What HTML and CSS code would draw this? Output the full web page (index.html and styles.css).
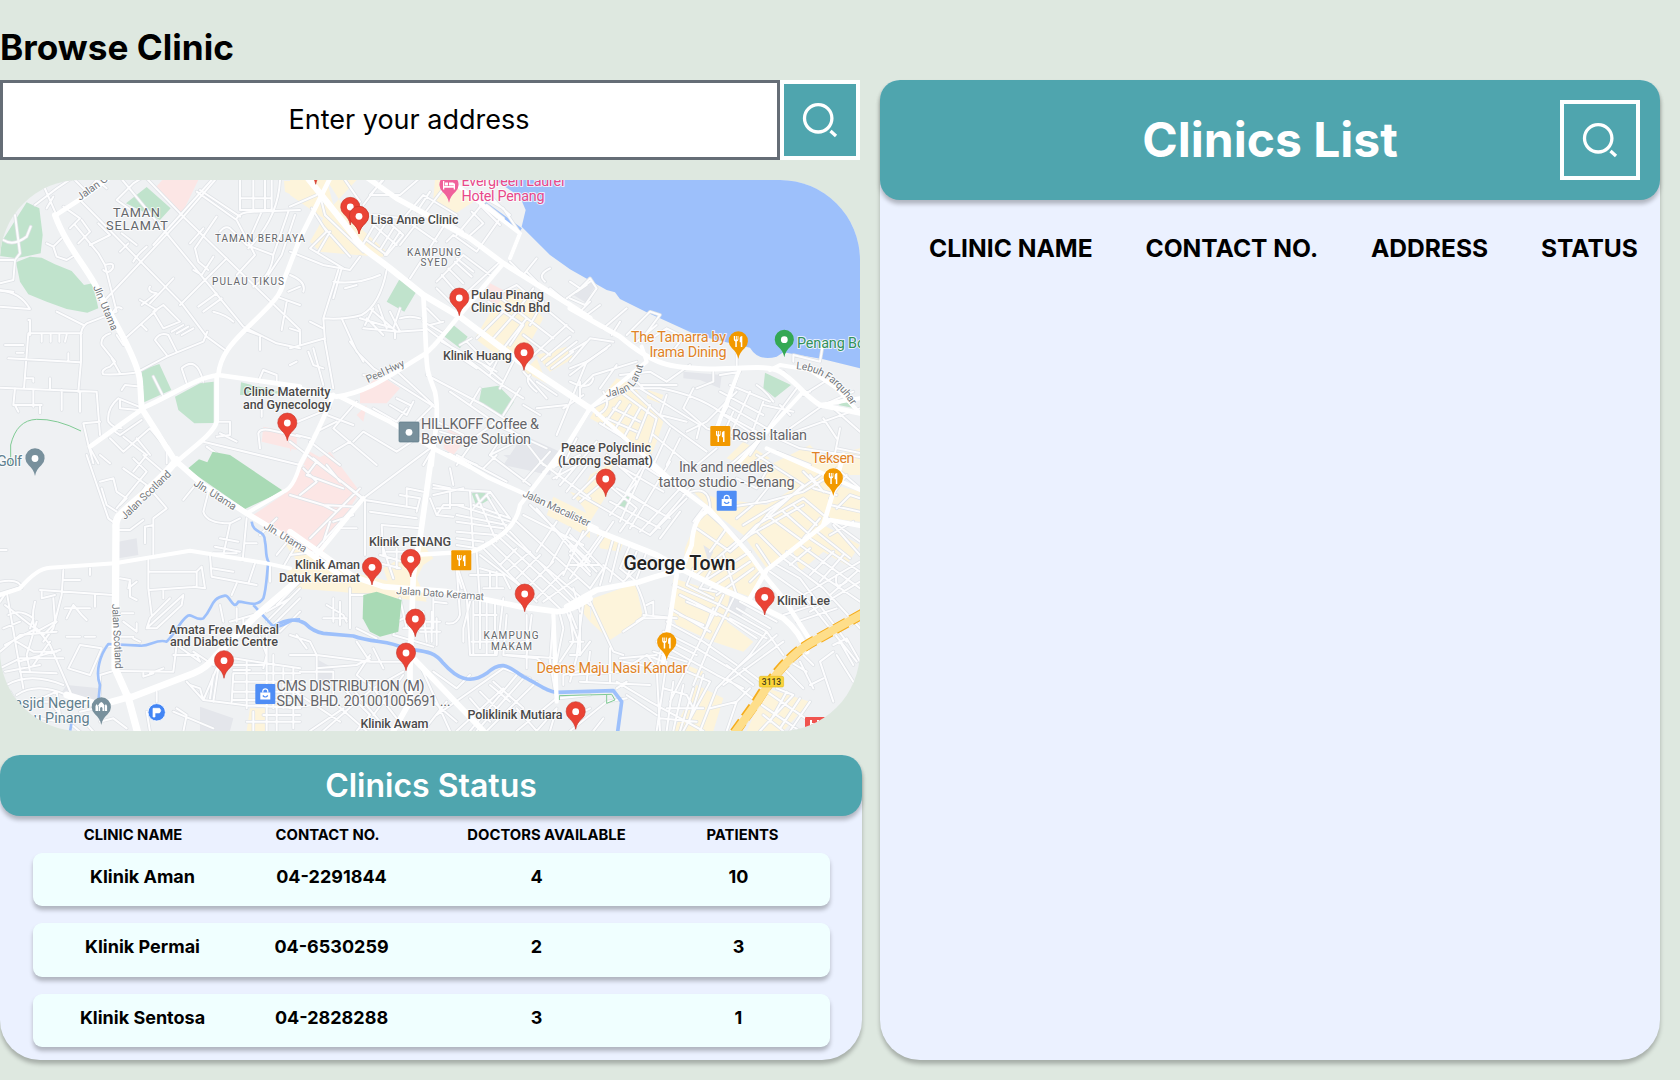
FILE: index.html
```html
<!DOCTYPE html>
<html lang="en">
<head>
<meta charset="utf-8">
<title>Browse Clinic</title>
<link rel="stylesheet" href="styles.css">
</head>
<body>
<main class="page">
  <section class="browse">
    <h1 class="page-title">Browse Clinic</h1>
    <div class="search">
      <div class="search-field">Enter your address</div>
      <button class="search-button" aria-label="Search"><svg class="search-icon" viewBox="0 0 40 40"><circle cx="18.2" cy="18.3" r="13.7"/><path d="M30.500 31l5.500 5"/></svg></button>
    </div>

    <svg class="map" viewBox="0 180 860 551" role="img" aria-label="Map of clinics in George Town">
      <defs>
        <path id="pin" d="M0 0C-.8-5-3-7.600-6.300-10.800A9.600 9.600 0 1 1 6.300-10.800C3-7.600.8-5 0 0Z"/>
        <path id="fork" d="M-4.500-5v3.500q0 1.700 1.500 2V6h1.500V.5q1.600-.3 1.600-2V-5h-.8v3.500h-.8V-5h-.9v3.500h-.8V-5ZM1.400-2.500Q1.400-5 4-5V6H2.500V1.300H1.400Z"/>
        <g id="bag"><rect x="-5" y="-2" width="10" height="7" fill="#fff"/><path d="M-2.500-2v-1.200a2.500 2.500 0 0 1 5 0V-2" fill="none" stroke="#fff" stroke-width="1.200"/><path d="M-2.500 1q2.500 3 5 0" fill="none" stroke="#4f8df5" stroke-width="1.200"/></g>
        <g id="minor">
          <g transform="translate(0 175) scale(.33333)">
            <path d="M130 30L165 110M105 90L170 40L230 0M140 100L160 65M225 15L260 50L290 15L320 40M350 75L400 25L440 0M350 75L400 110M240 75L545 385L620 485L675 525M430 0L550 125L900 465M355 0L730 455L830 505L900 520M550 125L645 15M550 125L315 375M635 15L460 210M190 95L240 130L210 160M245 135L270 170L235 205M295 145L330 180L270 210M140 205L160 215L185 190M160 215L170 245L200 255L225 240M225 150L295 235L315 270Q345 260 338 280Q325 300 310 285M590 50L710 135L765 240L710 300M600 45L720 125M720 0V105H815V0M720 70H815M760 15V105M795 15V105M710 130Q720 110 760 110L900 105M660 170Q675 150 690 160L740 210M740 210L820 240M785 110L745 200M840 15Q835 130 745 220M865 110L820 240Q815 300 760 335M885 120L845 240L805 300M650 125L585 220L595 260L625 285M680 250L540 390M640 245L605 300L580 285M610 160L570 205M440 215Q410 240 400 260M385 205L360 230M365 175L410 210M520 310L450 385M450 335Q440 350 470 355L425 390M490 390L540 440L490 460L460 410ZM550 450L515 470M565 455L530 475M580 460L545 480M665 370L610 410M650 355L595 395M640 410Q680 420 700 440M860 380L845 465M830 365L900 390M780 480V525M865 350L900 335M735 465L790 485M415 590L500 545L610 500L622 470M370 495L470 405L420 375M425 450L440 465M500 540L465 495Q480 470 505 480L530 530M560 625L545 580Q590 540 610 620M420 590Q370 600 310 598Q300 585 330 575L345 560L305 510Q300 485 330 475M335 550L360 595M315 270L350 410L260 445Q240 460 243 490V560L235 650M365 400Q350 390 340 410M245 475H85L72 640M85 435H90V480M125 480V500M152 480V500M178 480V500M200 480L195 500M15 510H70M50 533H70M25 550L240 562M205 535V560M75 610H100V620M0 638L290 650L300 780M45 640L40 690H125M100 645V695M150 610V640M185 645V705M240 650V710M45 690L55 710M120 715V695M45 120L60 235L45 255L40 315L0 325M10 195Q40 215 80 185L92 155M0 255H40M0 347Q60 350 90 402L0 395M170 410L250 450M350 480L370 510M0 345L40 350M425 635L375 630L365 645M430 700L355 670Q320 700 325 740Q340 760 365 760M360 675V700L415 705M425 735L360 780L345 770M250 745L300 740M250 745L265 810L280 865M270 820L295 865M300 840L330 865M330 790L370 830L450 760L500 820V865M370 785L440 840M480 780L500 810M460 605L490 665M410 790L450 840M655 740H690V780L650 785M660 775L710 800M610 800L900 870M775 620L790 585L830 600V625M870 570L890 560M780 820L775 775Q780 760 810 765L900 785M690 865L620 815M785 690V725"/>
          </g>
          <g transform="translate(290 175) scale(.33333)">
            <path d="M80 60L0 95M90 60L105 120L220 230M65 100L110 170L60 220L160 280M100 155L180 245M120 170L85 230M165 15L210 80M220 90L280 10M215 215L270 120L340 180L290 240L230 195M250 150L320 210M290 140L250 200M310 160L270 225M330 170L285 240M0 230L100 270L180 285M180 285L210 245M145 285L100 430Q160 435 215 420Q270 390 290 285M130 320Q200 330 270 300M155 280L130 370M155 430L200 530L250 580L440 700M100 430L105 500L130 640M0 520L105 490M0 300Q50 320 40 350M70 520L100 630M55 530L70 570L100 580M0 460L30 470V510M165 340L200 330M210 430L310 460L330 400M220 460L330 470L300 410M240 400L320 470M265 390L290 460M230 430L280 480M250 400L225 450M315 465V490M320 470L400 465M330 430Q360 420 390 430M360 310L470 140L520 170M330 210L480 15M250 120L340 130L400 60L500 120M340 130L440 200M420 50L380 110M280 15L240 60L330 60L400 0M470 200L490 180L560 230L630 130M500 180L600 60L630 95M545 110L580 145L530 190M590 90L640 130M610 75L660 120M560 55L640 100L690 175L660 250M570 90L630 150M440 320L520 240L600 300M455 300L490 340M475 280L520 325M495 260L545 305M500 250L550 290M440 340L490 390M500 380L630 260M400 440L460 475L500 430M410 460L620 620L700 670M450 440L410 400M455 500L620 590M500 540L560 580M530 500L600 570L640 520M545 490L510 510M595 380L700 450L660 510M620 360L790 490M640 350L680 330L850 470M560 490L640 410M640 520L710 430M610 490L690 400M730 340L680 410M760 380L720 450M700 480L780 540M755 555L840 485M770 570L860 500M785 580L850 530M720 550L830 450M700 590L770 670M720 600Q700 620 740 650M740 590L780 620M630 640L670 560M600 600L620 560M410 600L580 690L690 760M480 650L640 760L770 820M540 690L570 640M690 640L640 720M580 570L640 620M700 690L750 720M800 780L890 560L950 520M820 700L880 660M740 700L830 690M660 260L700 300L740 250M710 290L740 320M780 280Q740 300 765 320M830 370L900 320M845 390L870 410L900 380M780 340L830 380M740 620L800 660M300 570L430 690M220 600L270 610M200 680L130 760L260 870M110 720L190 750M80 770L140 740M60 800L150 870M0 750L120 700M20 780L60 790M190 800L220 770L320 830L380 790M130 830L180 800M250 700L320 740L350 700M300 690L350 720L370 680M320 670L360 690M430 690L380 740M440 740L520 780M450 770L550 800L500 870M440 780L430 830M550 790L620 740L700 790M400 870L430 820L560 870M600 840L640 780M690 780L760 870M420 450L460 440M180 500Q210 540 220 560M60 440L100 460"/>
          </g>
          <g transform="translate(570 175) scale(.33333)">
            <path d="M0 320L30 340L60 310L80 340L45 390L0 370M20 350L50 330M50 420L90 390M100 460L170 400M125 480L150 440M170 480L240 410L270 420L210 500M200 500L260 450M230 500L290 460L350 490M300 540L330 500M0 560L60 490L130 500M0 600L120 510M0 530L50 500M0 580L50 560M0 620Q60 650 70 610M30 640L70 600L200 560M30 670L30 620M140 570L90 640M100 650Q130 700 80 720M60 700L180 640L270 640Q380 660 450 710L560 770M180 600L220 640M150 600L240 590L290 620L360 570M215 630H320M180 640L300 750L410 830M150 650L260 730L240 800M130 700L210 740M110 730L200 770M90 745L180 800M150 680L100 750M180 690L130 770M210 700L160 790M240 690L200 790M210 640L390 750L380 790M290 660L270 720L350 740M350 770L410 740L500 650M370 640L340 700L410 760L530 800M430 590V620L380 640M510 580L470 700L430 770M450 650L580 720M480 630L600 680M470 690L590 760M460 720L570 790M540 650L480 780M580 680L540 790M490 710L450 800M500 580V540M450 600L510 590M580 690L670 710M560 630Q590 650 610 680M680 640L620 720L540 840M630 690L660 720M640 590Q700 660 720 650M700 660L780 610M660 760L760 690L850 650M600 780L690 820L900 850M620 790L870 700M760 730L800 790M790 700L870 770M810 760L790 860M670 560V540L750 560L760 500M440 820L380 870M560 800L480 870M300 760L250 870M330 790L290 870M250 780L360 870M600 830L540 870M620 830L720 870M800 820L900 840"/>
          </g>
          <g transform="translate(0 455) scale(.33333)">
            <path d="M260 0L325 190L345 205M300 80L340 70L350 110L380 130L360 150M305 100L320 150L350 170M370 40L440 90L500 160L460 190V300M400 10L440 50L350 160M440 0L400 50M430 0L500 60M355 225H390L430 195M460 210L435 215V265M440 90L420 120M550 135L590 85M625 110L610 170Q620 205 690 205L670 300M690 205L720 190M660 250L715 260M645 275L720 290M640 295H710M740 190L728 315M735 265H770M780 240L830 190M830 300L870 250M850 335L900 250M630 300L635 365L770 390M635 340L700 350M765 325L745 385M710 385L695 420M810 330V380M0 415L65 395M0 380Q60 370 65 400M0 285H20M190 345L185 420L160 520L130 560M190 375H240M270 340V360M120 405L340 420M285 420V455M125 410V430L165 420M105 440Q90 500 110 530L165 500L160 430M195 460H270M200 490L220 450L245 480L260 495M390 380V425L410 435M360 370L390 375L385 400L410 380M365 475H400M370 500L410 530V505M445 315V400L455 480M445 350L590 350V395L450 405M490 405V430M590 350L605 335L615 400L580 395M440 520L550 420L545 450L470 520ZM440 520L450 490L510 430M0 440L20 410L70 700M15 450L130 540L170 500M25 480Q60 460 100 490L90 520M10 520L60 500M15 570L110 520L150 570L215 720M0 590L60 540L170 530M50 560L100 590H170M55 620L180 585M0 640L60 610H190M15 650L120 630M60 650L170 655M20 690Q90 650 190 690M50 720Q110 680 200 720M100 740L170 710L180 780M30 710L70 780L180 800M60 740L150 740L190 790M110 500L80 600L90 650M150 560L100 630M240 570L205 640L270 660L305 580ZM200 545H240M255 545H285M340 545H400M320 575L350 570M350 645L300 660V720M360 648L520 650L530 570L600 620M430 655V665L460 655M520 600L590 600L600 620M580 590L640 630L700 610L900 640M650 640L610 735L730 750L900 760M640 660L630 730M655 640L640 740M700 655L695 740M700 680H900M700 710H900M700 735H900M700 655H900M740 620V760M800 540V830M770 520L800 600L790 640M820 600V760M850 640V760M880 640V820M700 630H790M700 645H750M450 655L490 640M560 680L610 735M470 710V740M440 770L450 830M530 760L560 780L550 830M520 770L640 820M570 690L600 700L610 735M240 770L330 750M240 785L280 830M180 780L240 830M300 800L340 790L380 820M400 550L420 560M710 500V460M730 490V520M690 500L760 480M800 500L900 400M810 520L900 430M840 530L900 470M830 450L900 380M660 450L670 500M800 470L870 430M740 800H900M760 770V830M790 780H900M830 760V830"/>
          </g>
          <g transform="translate(290 455) scale(.33333)">
            <path d="M0 120L100 150L200 155M70 10L215 130M80 20L50 60L160 100M40 40L80 80L30 120M0 -40L220 130L420 -20M110 30L150 80M225 135V300M225 135L380 160M240 170L380 190M275 210L390 220M275 210L280 300M330 120L390 130L380 170M350 150V100L400 110M140 170L210 100M120 200L100 260M130 200L190 180M150 220H200M60 250L140 170L100 150M80 280L215 130M420 130L440 180L490 185M430 90L480 100V160L440 160M430 120L520 100M480 40L490 90M430 100L600 110L660 190M540 110L550 290M550 150L660 190M500 150L660 200M500 180L650 210M500 200L640 220M500 230L620 240M500 250L580 260M500 270L560 280M560 120L620 260M590 120L650 220M600 110L550 160M440 180L460 150L520 150M500 330L530 420L540 600H620L640 430M500 350L515 400M560 290L570 440M540 360H640L660 400M570 340L640 360M580 400H640M600 350V400M620 350V400M550 440V600M570 440V580M590 440V600M615 440V600M550 480H620M545 560H620M500 340L510 480Q500 510 470 505M430 430V520M430 440L470 445M540 440L520 520V560M620 240L860 460M600 260L820 470M640 230L900 450M580 280L740 440M570 300L700 400M660 230L860 440M680 200L900 400M630 330L680 280M650 350L720 290M680 370L750 300M710 400L790 320M740 430L820 350M760 440L860 370M720 150L900 320M740 160L900 350M700 180L880 270M800 200L740 290M840 220L780 330M880 230L820 360M900 130L750 20M760 50L870 0M790 70L900 10M810 90L920 -40M800 70L860 -50M830 110L900 20M850 130L920 60M870 140L930 90M720 90L600 0L680 -40M650 80L500 0M580 40L620 0M780 -10L700 80M710 480V640M725 480L710 600M650 480L640 600L740 610L790 650M790 480L780 620L800 740M810 480L820 520L800 620M840 480L850 560L810 620M830 470L870 570L840 680M870 480V600L900 560M650 600L800 610M640 580L700 560M0 600L80 600L240 620L340 620M80 600V690M80 640L200 630L240 610M30 650L130 650V740M240 600L200 660L250 700L340 650M340 660L250 780M180 400V520M180 420H240M110 450L160 480L170 500M100 490H170M130 430V500M150 440V510M200 520L260 550M320 500L310 540L430 575M320 500L340 490M340 520H420M400 470L410 560M425 470V560M440 490V570M380 500L450 500M390 530H450M330 430L350 520M270 300L340 320M250 320L330 340M280 280L310 370M320 280V340M290 290H350M370 400L460 410M250 580L280 640M200 560L240 620M0 700L150 800M0 760L130 740L230 828M100 828L200 740L250 700L350 828M150 690L240 780L200 828M170 680L270 800M310 828L360 740M400 828L470 740M440 780L640 640L720 670M500 828L640 700M540 828L680 660M560 828L700 670M590 828L740 680M600 690L660 740M570 710L640 780M540 730L600 800M610 680L700 760M390 630L480 828M430 650L500 700L540 660M430 740L500 800M680 828L800 730M740 828L800 760L780 828M810 730L900 720M680 760L740 828M820 690V660L900 640M0 540L60 560L80 600M20 540L50 580M0 300L80 290M110 320L200 330M60 828L160 760"/>
          </g>
          <g transform="translate(570 455) scale(.33333)">
            <path d="M110 0L200 80L120 180M80 60L200 160L150 230M30 120L240 240L360 100M240 0L150 200M300 20L180 220M340 90L210 230M350 130L240 240M330 170L270 250M130 200L40 330M160 40L280 110M200 20L340 110M140 100L300 190M120 140L270 220M220 30L170 110L260 170M0 240L100 340L60 400M0 270L80 350M0 300L60 360M100 230L0 370M60 220L0 290M130 250L90 390M150 260L120 380M180 270L150 340L200 380M200 290L170 370M230 290L200 370M100 330L160 380L220 320M0 330L90 330M340 120Q420 80 420 160L380 200M370 200L400 160L500 250M380 220L480 290L540 240L600 170L750 60M450 160L590 140L700 110L800 50M500 190L560 140L600 90M520 210L650 130M540 240L700 150M470 220L420 290M560 0L700 90M600 30L560 100L500 70M700 90L600 180M480 290L560 210L700 130L760 180M590 180L700 260M560 230L640 310M640 170L720 240M670 150L740 210M600 330L560 270M380 360L500 260M400 380L540 290M420 400L540 320M440 420L550 340M460 300L500 420M540 380L570 350M320 360L300 480L260 640M310 390L450 450L590 530L640 600M330 420L470 490L560 550M300 460L420 530M290 500L400 560L500 630M280 530L380 580L480 640M260 560L440 660L520 700M430 460L400 540L360 620M460 420L390 560L300 740M490 430L420 570L370 690M510 440L620 500M500 460L600 520M480 490L590 550M590 530L540 600L440 700L390 828M620 540L500 640M640 560L460 690M380 600L300 560M350 620L250 590M330 480L400 510M350 440L420 470M380 450L440 480M420 350L390 400L440 410M370 340L350 390L430 430M220 480L320 490M160 530L220 490L300 490M200 390Q220 430 230 480L200 500M230 450L250 440V480M60 440L130 590L160 600M10 400L30 470M40 440L20 600M0 470L20 520M0 560H40M0 600H30M120 580V680M30 680L240 690M0 660L150 650L230 600L280 620M150 610L260 600M230 600L270 650M160 620L260 640M60 590L50 680M140 680L240 740L400 828M170 680L140 700M170 720L260 780M260 640L270 828M290 620L260 828M280 700L350 720L370 760M310 680L290 828M340 690L310 828M370 700L330 828M290 760H400M270 790L380 800M350 650L420 680L340 828M400 660L360 790M470 670L560 740M470 630L550 690M520 640L600 700L560 740M420 760L500 740L540 700M500 740L470 828M560 740L690 828M590 710L750 820M620 700L670 720L570 828M650 710L600 800M690 730L630 820M720 740L660 828M580 780L640 828M600 350L700 420L860 620M620 330L690 370L830 560M640 310L760 400L870 520M690 270L870 400M720 250L870 350M740 230L840 310M650 290L870 440M700 420L870 320M720 470L870 380M680 500L800 460M640 480L760 440M660 330L720 280M720 360L790 290M750 380L820 300M780 420L860 350M800 360Q790 410 830 380M760 180L870 260M780 150L870 170M780 130L830 60M790 210L870 300M750 190L700 250M720 60L760 110M730 100L800 120M740 90L700 50M800 40L870 100M800 160L840 120L870 130M780 240L850 200M790 570L830 550L870 620M810 560L850 630M790 590L750 620L790 740M800 600L850 680M730 630L700 600M690 620L730 700M720 690L760 670M640 640L700 700M660 620L710 650M0 828L110 740L170 730M70 828L100 790M0 790L60 760"/>
          </g>
        </g>
        <g id="major">
          <g transform="translate(0 175) scale(.33333)">
            <path d="M165 120C200 220 280 300 300 360C350 450 415 560 420 620L425 700L530 865" stroke-width="18"/>
            <path d="M165 122L260 60L345 -5" stroke-width="14"/>
            <path d="M425 700C520 660 580 610 655 600L900 635M655 600C660 540 700 500 735 465C800 400 845 365 850 320L900 190L1000 -10M650 600L650 740C640 780 560 830 530 862M430 700L360 750L270 815" stroke-width="14"/>
          </g>
          <g transform="translate(290 175) scale(.33333)">
            <path d="M30 -20L190 180C210 220 250 240 300 280L400 360L510 425L690 560L900 700" stroke-width="19"/>
            <path d="M220 0L320 70L540 190L640 265L840 390L900 430" stroke-width="16"/>
            <path d="M640 265L505 425C450 490 430 520 400 540C300 600 240 650 140 665L0 635M400 360C415 600 400 560 435 650C450 720 430 800 425 870M150 665L300 740L430 820L540 875M130 660Q90 760 30 870" stroke-width="14"/>
            <path d="M480 15L690 175L660 250M900 700L790 875" stroke-width="12"/>
          </g>
          <g transform="translate(570 175) scale(.33333)">
            <path d="M0 400L150 485C250 570 300 580 420 582C530 580 600 570 630 590C680 620 700 660 750 690L870 715" stroke-width="15"/>
            <path d="M60 700L230 560L215 515M60 700L0 800M60 695L310 920M600 585L630 570L720 585L800 640L870 715M510 580L440 760M700 650L590 770L500 870M590 820L870 945M750 690L870 670" stroke-width="12"/>
          </g>
          <g transform="translate(0 455) scale(.33333)">
            <path d="M530 15C480 80 400 140 365 175Q345 190 348 220L345 640L385 730L415 840" stroke-width="22"/>
            <path d="M530 20L610 90L740 175L880 260L1020 360" stroke-width="17"/>
            <path d="M385 730L580 655Q620 640 650 600L760 490L900 370M390 725L300 750L200 720" stroke-width="20"/>
            <path d="M740 175L850 110Q880 100 900 30M0 420L60 400Q110 340 150 338L345 325L570 287L800 325L870 340" stroke-width="12"/>
          </g>
          <g transform="translate(290 455) scale(.33333)">
            <path d="M0 230L100 300L190 365L280 395L470 410L690 455L800 470Q840 470 900 430M425 0L390 250L370 360L360 640V740L310 828M370 610L580 828" stroke-width="17"/>
            <path d="M480 0L590 65L700 115L920 220M820 -20L690 150Q680 210 620 250T540 290L370 300M220 130L80 300M790 480L800 740" stroke-width="13"/>
          </g>
          <g transform="translate(570 455) scale(.33333)">
            <path d="M-10 455L80 405L210 380Q300 350 340 345L450 400L540 440L640 490Q690 530 710 590M60 220L260 300L340 345" stroke-width="17"/>
            <path d="M225 20L420 165L540 300L590 370L640 430L720 555M420 165Q370 180 365 270L340 330M870 212L780 195L590 345L540 430M760 210L790 110L820 0M320 360L300 490L280 620" stroke-width="14"/>
          </g>
        </g>
      </defs>

      <rect y="180" width="860" height="551" fill="#eff1f3"/>
      <!-- districts, parks, water -->
      <g transform="translate(0 175) scale(.33333)">
        <path fill="#c0e3cc" d="M80 82L118 100L128 180L122 235L50 250L0 243L5 200ZM48 262L90 245L125 248L165 268L215 288L252 330L278 325L295 400L262 413L200 402L140 380L85 358L60 320ZM440 36L512 100L480 135L378 85ZM425 585L478 567L514 645L432 682ZM525 665L600 625L641 620V744L583 745L535 705ZM723 622L860 655L720 660Z"/>
        <path fill="#fce6e5" d="M487 15H595L545 118L465 40ZM790 755L890 775V825L785 800Z"/>
        <path fill="#fdf4db" d="M852 18H880V62L855 50Z"/>
        <path d="M32 870V810Q50 735 110 733T243 768" fill="none" stroke="#7fca94" stroke-width="3"/>
      </g>
      <g transform="translate(290 175) scale(.33333)">
        <path fill="#c0e3cc" d="M330 310L382 345L343 410L290 380ZM490 450L533 485L510 520L460 482ZM575 640L625 632L672 680L640 730L567 680Z"/>
        <path fill="#fdf4db" d="M0 60L100 130L60 200L90 230L200 240L280 245L285 225L190 140L110 15H0ZM110 15H200L130 90ZM435 15H480L550 80L490 120L430 70ZM620 380L690 340L760 430L700 540L650 560L580 510L555 490ZM740 540L830 515L850 550L780 590ZM700 590L740 550L770 625Z"/>
        <path fill="#fce6e5" d="M600 325L650 350L620 390L580 370ZM210 650L270 600L330 640L290 685H210ZM200 720L230 690L220 740ZM480 740L530 790L490 840L460 820ZM0 790L20 800L0 830ZM60 830L130 870H40Z"/>
        <path fill="#e4e6eb" d="M700 780L810 830L780 900L640 870ZM850 360L900 330V390Z"/>
      </g>
      <g transform="translate(570 175) scale(.33333)">
        <path fill="#9dc0fb" d="M-225 15L-150 65L-133 105L-145 155L-60 240L0 283L110 345L135 352L150 372L230 412L270 430L380 480L440 495L540 518Q565 560 620 545L640 532L760 553L870 580V15Z"/>
        <path d="M-258 85L-148 165" stroke="#9dc0fb" stroke-width="13" fill="none"/>
        <path fill="#fdf4db" d="M140 610L190 630L230 690L280 740L260 800L240 850L150 780L60 730L100 660ZM235 645L280 660L270 685L230 670ZM520 800L600 850L540 880L470 850ZM760 850L870 820V900H750Z"/>
        <path fill="#c0e3cc" d="M585 593L663 630L615 668L580 640ZM805 690L825 678L855 700Z"/>
        <path fill="#e4e6eb" d="M340 590L455 600L450 640L390 615L340 610ZM30 340L55 315L75 335L45 380Z"/>
      </g>
      <g transform="translate(0 455) scale(.33333)">
        <path fill="#fce6e5" d="M760 180L870 105L900 40L990 -10L1080 110L960 305Z"/>
        <path fill="#e4e6eb" d="M355 260L410 250L415 300L355 310ZM200 690L300 700L290 740L180 720ZM600 755L700 790L690 828H600Z"/>
        <path fill="#fdf4db" d="M850 260L1000 340L1260 400L1280 440L1020 410L880 400L860 350L900 330ZM750 760H800V828H740Z"/>
      </g>
      <g transform="translate(290 455) scale(.33333)">
        <path fill="#c0e3cc" d="M545 115L580 110L605 130L560 155Z"/>
        <path fill="#fdf4db" d="M280 340L400 270L430 310L400 330L380 370L410 435L300 400ZM790 125L900 180V250L840 215L770 180ZM840 110L900 130V180ZM860 450L900 430V500Z"/>
        <path fill="#e4e6eb" d="M640 0H790L770 60L700 40ZM85 615L130 640L120 690H85Z"/>
      </g>
      <g transform="translate(570 455) scale(.33333)">
        <path fill="#c0e3cc" d="M165 120L183 130L160 162L138 150Z"/>
        <path fill="#fdf4db" d="M60 60L130 20L110 120L60 200L30 130ZM80 230L160 260L150 290L90 280ZM210 380L70 430L60 500L120 555L220 490L200 400ZM345 280L370 220L410 170L500 260L540 300L575 350L540 425L440 390L340 340ZM310 370L500 430L470 500L550 560L520 590L430 560L320 510L300 470ZM360 100L440 130L590 150L720 70L870 110V200L780 190L700 250L590 340L520 240L430 170ZM580 40L720 -30L800 50L730 130L590 80ZM670 290L760 210L870 270L830 330L760 290L690 350ZM380 690L460 730L430 828H310ZM590 700L720 740L640 828H530ZM350 630L400 650L380 680Z"/>
        <path fill="#e4e6eb" d="M400 270L430 290L415 320ZM480 420L540 440L510 490L470 470Z"/>
      </g>

      <g fill="none" stroke-linecap="round" stroke-linejoin="round">
        <use href="#minor" stroke="#dfe2e6" stroke-width="10.500"/>
        <use href="#minor" stroke="#fdfdfe" stroke-width="6"/>
      </g>
      <g fill="#a9dab5">
        <path transform="translate(0 455) scale(.33333)" d="M562 42L597 13L622 22L638 -10L690 0L850 108L735 162Z"/>
        <path transform="translate(290 455) scale(.33333)" d="M220 420L260 410L335 435L325 530L270 545L240 530L218 490Z"/>
      </g>
      <g fill="none" stroke="#9dc0fb" stroke-width="8" stroke-linejoin="round">
        <path transform="translate(0 455) scale(.33333)" d="M755 200C760 240 795 220 795 260C800 280 795 300 805 320C800 360 800 400 790 430C770 460 740 440 715 440C700 470 690 420 675 422C630 430 640 460 610 490C590 500 570 470 560 485C540 500 530 530 500 560C470 550 450 575 420 572L325 567C300 600 285 650 300 690L295 740M760 450L820 515C850 520 870 490 900 493M215 800L210 830"/>
        <path transform="translate(290 455) scale(.33333)" stroke-width="11" d="M-50 515C-10 490 20 490 45 505Q70 530 100 535L190 543C250 565 300 555 340 580C400 590 430 585 460 625C500 670 540 690 590 655C640 610 660 640 700 665C750 690 770 710 800 712L970 707L995 740L983 830"/>
        <path transform="translate(290 455) scale(.33333)" stroke="#7fca94" stroke-width="3" d="M808 735V722L965 718L975 735L950 745V720"/>
      </g>
      <g fill="none" stroke-linejoin="round" stroke-linecap="round"><use href="#major" stroke="#fff"/></g>
      <g transform="translate(570 455) scale(.33333)" fill="none">
        <path d="M485 845L560 740Q640 610 720 565T880 475" stroke="#f5ad1d" stroke-width="31"/>
        <path d="M485 845L560 740Q640 610 720 565T880 475" stroke="#f0f1f3" stroke-width="33" stroke-dasharray="15 40"/>
        <path d="M490 840L563 740Q643 610 720 565T880 475" stroke="#fede8a" stroke-width="25"/>
      </g>

      <!-- street names -->
      <g class="street">
        <text transform="translate(80 201) rotate(-36)">Jalan Gottlieb</text>
        <text transform="translate(93 287) rotate(67)" textLength="48">Jln. Utama</text>
        <text transform="translate(368 383) rotate(-25)" textLength="41">Peel Hwy</text>
        <path id="larut" d="M606 397Q630 394 636 383T643 366" fill="none"/>
        <text><textPath href="#larut" textLength="53">Jalan Larut</textPath></text>
        <path id="farquhar" d="M796 369Q829 371 852 406" fill="none"/>
        <text textLength="69"><textPath href="#farquhar">Lebuh Farquhar</textPath></text>
        <text transform="translate(125 520) rotate(-44)" textLength="65">Jalan Scotland</text>
        <text transform="translate(193 485) rotate(32)" textLength="48">Jln. Utama</text>
        <text transform="translate(263 528) rotate(31)" textLength="48">Jln. Utama</text>
        <text transform="translate(112 604) rotate(87)" textLength="65">Jalan Scotland</text>
        <text transform="translate(396 594) rotate(4)" textLength="88">Jalan Dato Keramat</text>
        <text transform="translate(522 496) rotate(25)" textLength="73">Jalan Macalister</text>
      </g>
      <g class="area">
        <text class="area-large" x="113" y="217" textLength="48">TAMAN</text><text class="area-large" x="106" y="230" textLength="63">SELAMAT</text>
        <text x="215" y="241.500" textLength="91">TAMAN BERJAYA</text><text x="212" y="284.500" textLength="73">PULAU TIKUS</text>
        <text x="407" y="256" textLength="55">KAMPUNG</text><text x="420.500" y="266" textLength="28">SYED</text>
        <text x="483.500" y="639" textLength="56">KAMPUNG</text><text x="491" y="649.700" textLength="42">MAKAM</text>
      </g>
      <g class="clinic">
        <text x="370.500" y="223.700" textLength="88">Lisa Anne Clinic</text>
        <text x="471" y="299" textLength="73">Pulau Pinang</text><text x="471" y="311.700" textLength="79">Clinic Sdn Bhd</text>
        <text x="443" y="360" textLength="69">Klinik Huang</text>
        <text x="243.500" y="396" textLength="87">Clinic Maternity</text><text x="243" y="408.700" textLength="88">and Gynecology</text>
        <text x="561" y="451.700" textLength="90">Peace Polyclinic</text><text x="558" y="464.500" textLength="95">(Lorong Selamat)</text>
        <text x="369" y="545.700" textLength="82">Klinik PENANG</text>
        <text x="295" y="569" textLength="65">Klinik Aman</text><text x="279" y="581.700" textLength="81">Datuk Keramat</text>
        <text x="777" y="604.500" textLength="53">Klinik Lee</text>
        <text x="169" y="633.700" textLength="110">Amata Free Medical</text><text x="170" y="646.300" textLength="108">and Diabetic Centre</text>
        <text x="360.500" y="727.700" textLength="68">Klinik Awam</text><text x="467.500" y="718.700" textLength="95">Poliklinik Mutiara</text>
      </g>
      <g class="place">
        <text x="421" y="429.300" textLength="118">HILLKOFF Coffee &amp;</text><text x="421" y="443.700" textLength="110">Beverage Solution</text>
        <text x="732" y="439.700" textLength="75">Rossi Italian</text>
        <text x="679" y="472.300" textLength="95">Ink and needles</text><text x="658.500" y="487" textLength="136">tattoo studio - Penang</text>
        <text x="276.500" y="691" textLength="148">CMS DISTRIBUTION (M)</text><text x="276.500" y="705.700" textLength="174">SDN. BHD. 201001005691 ...</text>
        <g fill="#e08327"><text x="631" y="342.300" textLength="95">The Tamarra by</text><text x="649.500" y="357.300" textLength="77">Irama Dining</text><text x="811.500" y="463.300" textLength="43">Teksen</text><text x="536.500" y="673.300" textLength="151">Deens Maju Nasi Kandar</text></g>
        <g fill="#e8488a"><text x="461.500" y="185.500" textLength="103">Evergreen Laurel</text><text x="461.500" y="201" textLength="83">Hotel Penang</text></g>
        <text x="797" y="348" fill="#33915a" textLength="99">Penang Botanic</text>
        <g fill="#617f8e"><text x="-3" y="466.300" textLength="25">Golf</text><text x="90" y="708" text-anchor="end">Masjid Negeri</text><text x="89.500" y="723" text-anchor="end">Pulau Pinang</text></g>
      </g>
      <text class="city" x="623.500" y="569.700" textLength="112">George Town</text>
      <rect x="759.300" y="676.300" width="24.300" height="10.700" rx="1.500" fill="#fad43a" stroke="#e3b91d" stroke-width=".6"/>
      <text class="route" x="771.500" y="685" text-anchor="middle">3113</text>

      <!-- markers -->
      <g fill="#ea4335" stroke="#c5352a" stroke-width=".6">
        <use href="#pin" x="315.700" y="184.300"/><use href="#pin" x="350.300" y="225"/><use href="#pin" x="359" y="234"/><use href="#pin" x="459.300" y="315.700"/><use href="#pin" x="524" y="370.300"/><use href="#pin" x="287.300" y="440.700"/><use href="#pin" x="372" y="585"/><use href="#pin" x="410.700" y="577"/><use href="#pin" x="415.300" y="636.700"/><use href="#pin" x="406" y="670.700"/><use href="#pin" x="524.700" y="611.700"/><use href="#pin" x="575.700" y="729.300"/><use href="#pin" x="605.700" y="496.700"/><use href="#pin" x="764.700" y="615"/><use href="#pin" x="224" y="678.300"/>
      </g>
      <use href="#pin" x="449" y="202.700" fill="#f0619b"/>
      <g fill="#f29900"><use href="#pin" x="738.300" y="359"/><use href="#pin" x="833.300" y="496"/><use href="#pin" x="666.700" y="660"/><rect x="710.300" y="426" width="20" height="20" rx="1"/><rect x="451.300" y="550.300" width="20" height="20" rx="1"/></g>
      <use href="#pin" x="784.300" y="357.300" fill="#34a853"/>
      <g fill="#78909c"><use href="#pin" x="35" y="476"/><use href="#pin" x="101.300" y="725"/><rect x="399" y="422" width="20" height="20" rx="1" stroke="#607d8b" stroke-width=".7"/></g>
      <g fill="#4f8df5"><rect x="716.700" y="490.700" width="20" height="20" rx="1"/><rect x="255.300" y="684" width="20" height="20" rx="1"/></g>
      <g fill="#fff">
        <circle cx="350.300" cy="207" r="3.400"/>
        <use href="#pin" x="359" y="234" fill="#ea4335" stroke="#c5352a" stroke-width=".6"/>
        <circle cx="359" cy="216.300" r="3.400"/><circle cx="459.300" cy="298" r="3.400"/><circle cx="524" cy="352.700" r="3.400"/><circle cx="287.300" cy="423" r="3.400"/><circle cx="372" cy="567.300" r="3.400"/><circle cx="410.700" cy="559.300" r="3.400"/><circle cx="415.300" cy="619" r="3.400"/><circle cx="406" cy="653" r="3.400"/><circle cx="524.700" cy="594" r="3.400"/><circle cx="575.700" cy="711.700" r="3.400"/><circle cx="605.700" cy="479" r="3.400"/><circle cx="764.700" cy="597.300" r="3.400"/><circle cx="224" cy="660.700" r="3.400"/><circle cx="784.300" cy="339.700" r="3.400"/><circle cx="35" cy="458.500" r="3.400"/><circle cx="409" cy="432.300" r="3.400"/>
        <use href="#fork" x="738.300" y="341"/><use href="#fork" x="833.300" y="478"/><use href="#fork" x="666.700" y="642.500"/><use href="#fork" x="720.500" y="436"/><use href="#fork" x="461.500" y="560"/>
        <path d="M443 181h1.300v5h9.400v-2.500h1.300v6h-1.300v-1.700h-9.400v1.700H443ZM445 182.500h3v3h-3ZM449 182.500h4q1 0 1 1.500v1.500h-5Z"/>
        <path d="M95.500 711v-5l1.200-2 1.200 2v1.500q0-3.500 3.400-5.500 3.400 2 3.400 5.500V706l1.200-2 1.200 2v5h-2.500v-5h-.6v5h-1.500v-3q-1.200-2-2.400 0v3h-1.500v-5h-.6v5Z"/>
      </g>
      <use href="#bag" x="726.700" y="501"/><use href="#bag" x="265.300" y="694.500"/>
      <circle cx="156.700" cy="712.300" r="8.700" fill="#4285f4" stroke="#fff" stroke-width=".8"/><path d="M153 708.300h6.500q2.500 2.300 0 4.600H155V717h-2Z" fill="#fff" stroke="#fff" stroke-width=".7"/>
      <rect x="805" y="717" width="20" height="20" rx="1" fill="#f0544f"/><path d="M811 720v8M818 720v8M811 724h7" stroke="#fff" stroke-width="2"/>
    </svg>

    <section class="status-panel">
      <h2 class="panel-header status-header">Clinics Status</h2>
      <div class="status-grid status-labels"><span>CLINIC NAME</span><span>CONTACT NO.</span><span>DOCTORS AVAILABLE</span><span>PATIENTS</span></div>
      <div class="status-rows">
        <div class="status-grid status-row"><span>Klinik Aman</span><span>04-2291844</span><span>4</span><span>10</span></div>
        <div class="status-grid status-row"><span>Klinik Permai</span><span>04-6530259</span><span>2</span><span>3</span></div>
        <div class="status-grid status-row"><span>Klinik Sentosa</span><span>04-2828288</span><span>3</span><span>1</span></div>
      </div>
    </section>
  </section>

  <section class="list-panel">
    <header class="panel-header list-header">
      <h2 class="list-title">Clinics List</h2>
      <button class="search-button" aria-label="Search clinics"><svg class="search-icon" viewBox="0 0 40 40"><circle cx="18.200" cy="18.300" r="13.700"/><path d="M30.500 31l5.500 5"/></svg></button>
    </header>
    <div class="list-labels"><span>CLINIC NAME</span><span>CONTACT NO.</span><span>ADDRESS</span><span>STATUS</span></div>
  </section>
</main>
</body>
</html>
```
FILE: styles.css
```css
* { box-sizing: border-box; }
body { margin: 0; background: #dee8e0; color: #000; font-family: Inter, "Liberation Sans", sans-serif; }
h1, h2 { margin: 0; }
.page { display: grid; grid-template-columns: 862px 780px; column-gap: 18px; height: 1080px; overflow: hidden; }
.browse { display: flex; flex-direction: column; }
.page-title { height: 80px; padding-top: 25px; font-size: 35.200px; line-height: 44px; font-weight: 700; }
.search { display: flex; height: 80px; }
.search-field { width: 780px; border: 3px solid #656d76; background: #fff; display: flex; align-items: center; justify-content: center; padding: 0 0 1px 38px; font-size: 27px; }
.search-button { width: 80px; height: 80px; padding: 0; border: 4px solid #fff; border-radius: 0; background: #4fa5ae; display: grid; place-items: center; }
.search-icon { width: 40px; height: 40px; fill: none; stroke: #fff; stroke-width: 3.300; }
.map { width: 860px; height: 551px; margin-top: 20px; border-radius: 80px; display: block; font-family: Roboto, "Liberation Sans", sans-serif; }
.map text { paint-order: stroke; stroke: #fff; stroke-width: 2px; stroke-opacity: .75; stroke-linejoin: round; }
.street { font-size: 10.500px; fill: #75797d; }
.area { font-size: 10px; letter-spacing: 1px; fill: #63666a; }
.area-large { font-size: 12.800px; }
.clinic { font-size: 12.600px; font-weight: 500; fill: #4b4a4a; }
.place { font-size: 14.400px; fill: #66666a; }
.city { font-size: 19.500px; font-weight: 500; fill: #222; }
.map .route { font-size: 8.500px; font-weight: 500; fill: #4a421b; stroke: none; }
.panel-header { border-radius: 20px; background: #4fa5ae; color: #fff; box-shadow: 0 4px 4px rgba(0, 0, 0, .25); }
.status-panel { height: 305px; margin-top: 24px; border-radius: 20px 20px 40px 40px; background: #ebf1ff; box-shadow: 0 4px 4px rgba(0, 0, 0, .25); }
.status-header { height: 61px; text-align: center; font-size: 32px; line-height: 61px; font-weight: 600; }
.status-grid { display: grid; text-align: center; }
.status-labels { grid-template-columns: 200px 189px 230px 181px; padding-left: 33px; height: 37px; line-height: 39px; font-size: 14.800px; font-weight: 700; }
.status-labels span:nth-child(3) { padding-left: 19px; white-space: nowrap; }
.status-rows { display: flex; flex-direction: column; gap: 17.300px; padding: 0 32px 0 33px; }
.status-row { grid-template-columns: 219px 159px 251px 153px; height: 53.200px; border-radius: 9px; background: #f0ffff; box-shadow: 0 4px 4px rgba(0, 0, 0, .25); font-size: 18px; line-height: 47px; font-weight: 700; }
.list-panel { height: 980px; margin-top: 80px; border-radius: 20px 20px 40px 40px; background: #ebf1ff; box-shadow: 0 4px 4px rgba(0, 0, 0, .25); }
.list-header { height: 120px; display: grid; grid-template-columns: 80px 1fr 80px; align-items: center; padding: 0 20px; }
.list-title { grid-column: 2; padding-bottom: 2px; text-align: center; font-size: 48px; font-weight: 700; }
.list-labels { display: flex; justify-content: space-between; padding: 32px 22px 0 49px; font-size: 24.600px; line-height: 32px; font-weight: 700; }
```
